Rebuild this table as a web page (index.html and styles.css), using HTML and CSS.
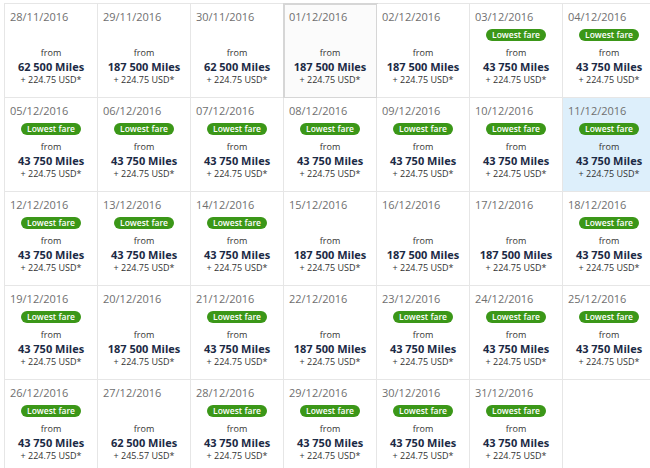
FILE: index.html
```html
<!DOCTYPE html>
<html>
<head>
<meta charset="utf-8">
<link rel="stylesheet" href="styles.css">
</head>
<body>
<div class="page">
<div class="grid">
<div class="cell"><div class="date">28/11/2016</div><div class="badge-row"></div><div class="from">from</div><div class="miles">62 500 Miles</div><div class="usd">+ 224.75 USD*</div></div>
<div class="cell"><div class="date">29/11/2016</div><div class="badge-row"></div><div class="from">from</div><div class="miles">187 500 Miles</div><div class="usd">+ 224.75 USD*</div></div>
<div class="cell"><div class="date">30/11/2016</div><div class="badge-row"></div><div class="from">from</div><div class="miles">62 500 Miles</div><div class="usd">+ 224.75 USD*</div></div>
<div class="cell selected"><div class="date">01/12/2016</div><div class="badge-row"></div><div class="from">from</div><div class="miles">187 500 Miles</div><div class="usd">+ 224.75 USD*</div></div>
<div class="cell"><div class="date">02/12/2016</div><div class="badge-row"></div><div class="from">from</div><div class="miles">187 500 Miles</div><div class="usd">+ 224.75 USD*</div></div>
<div class="cell"><div class="date">03/12/2016</div><div class="badge-row"><span class="badge">Lowest fare</span></div><div class="from">from</div><div class="miles">43 750 Miles</div><div class="usd">+ 224.75 USD*</div></div>
<div class="cell"><div class="date">04/12/2016</div><div class="badge-row"><span class="badge">Lowest fare</span></div><div class="from">from</div><div class="miles">43 750 Miles</div><div class="usd">+ 224.75 USD*</div></div>

<div class="cell"><div class="date">05/12/2016</div><div class="badge-row"><span class="badge">Lowest fare</span></div><div class="from">from</div><div class="miles">43 750 Miles</div><div class="usd">+ 224.75 USD*</div></div>
<div class="cell"><div class="date">06/12/2016</div><div class="badge-row"><span class="badge">Lowest fare</span></div><div class="from">from</div><div class="miles">43 750 Miles</div><div class="usd">+ 224.75 USD*</div></div>
<div class="cell"><div class="date">07/12/2016</div><div class="badge-row"><span class="badge">Lowest fare</span></div><div class="from">from</div><div class="miles">43 750 Miles</div><div class="usd">+ 224.75 USD*</div></div>
<div class="cell"><div class="date">08/12/2016</div><div class="badge-row"><span class="badge">Lowest fare</span></div><div class="from">from</div><div class="miles">43 750 Miles</div><div class="usd">+ 224.75 USD*</div></div>
<div class="cell"><div class="date">09/12/2016</div><div class="badge-row"><span class="badge">Lowest fare</span></div><div class="from">from</div><div class="miles">43 750 Miles</div><div class="usd">+ 224.75 USD*</div></div>
<div class="cell"><div class="date">10/12/2016</div><div class="badge-row"><span class="badge">Lowest fare</span></div><div class="from">from</div><div class="miles">43 750 Miles</div><div class="usd">+ 224.75 USD*</div></div>
<div class="cell today"><div class="date">11/12/2016</div><div class="badge-row"><span class="badge">Lowest fare</span></div><div class="from">from</div><div class="miles">43 750 Miles</div><div class="usd">+ 224.75 USD*</div></div>

<div class="cell"><div class="date">12/12/2016</div><div class="badge-row"><span class="badge">Lowest fare</span></div><div class="from">from</div><div class="miles">43 750 Miles</div><div class="usd">+ 224.75 USD*</div></div>
<div class="cell"><div class="date">13/12/2016</div><div class="badge-row"><span class="badge">Lowest fare</span></div><div class="from">from</div><div class="miles">43 750 Miles</div><div class="usd">+ 224.75 USD*</div></div>
<div class="cell"><div class="date">14/12/2016</div><div class="badge-row"><span class="badge">Lowest fare</span></div><div class="from">from</div><div class="miles">43 750 Miles</div><div class="usd">+ 224.75 USD*</div></div>
<div class="cell"><div class="date">15/12/2016</div><div class="badge-row"></div><div class="from">from</div><div class="miles">187 500 Miles</div><div class="usd">+ 224.75 USD*</div></div>
<div class="cell"><div class="date">16/12/2016</div><div class="badge-row"></div><div class="from">from</div><div class="miles">187 500 Miles</div><div class="usd">+ 224.75 USD*</div></div>
<div class="cell"><div class="date">17/12/2016</div><div class="badge-row"></div><div class="from">from</div><div class="miles">187 500 Miles</div><div class="usd">+ 224.75 USD*</div></div>
<div class="cell"><div class="date">18/12/2016</div><div class="badge-row"><span class="badge">Lowest fare</span></div><div class="from">from</div><div class="miles">43 750 Miles</div><div class="usd">+ 224.75 USD*</div></div>

<div class="cell"><div class="date">19/12/2016</div><div class="badge-row"><span class="badge">Lowest fare</span></div><div class="from">from</div><div class="miles">43 750 Miles</div><div class="usd">+ 224.75 USD*</div></div>
<div class="cell"><div class="date">20/12/2016</div><div class="badge-row"></div><div class="from">from</div><div class="miles">187 500 Miles</div><div class="usd">+ 224.75 USD*</div></div>
<div class="cell"><div class="date">21/12/2016</div><div class="badge-row"><span class="badge">Lowest fare</span></div><div class="from">from</div><div class="miles">43 750 Miles</div><div class="usd">+ 224.75 USD*</div></div>
<div class="cell"><div class="date">22/12/2016</div><div class="badge-row"></div><div class="from">from</div><div class="miles">187 500 Miles</div><div class="usd">+ 224.75 USD*</div></div>
<div class="cell"><div class="date">23/12/2016</div><div class="badge-row"><span class="badge">Lowest fare</span></div><div class="from">from</div><div class="miles">43 750 Miles</div><div class="usd">+ 224.75 USD*</div></div>
<div class="cell"><div class="date">24/12/2016</div><div class="badge-row"><span class="badge">Lowest fare</span></div><div class="from">from</div><div class="miles">43 750 Miles</div><div class="usd">+ 224.75 USD*</div></div>
<div class="cell"><div class="date">25/12/2016</div><div class="badge-row"><span class="badge">Lowest fare</span></div><div class="from">from</div><div class="miles">43 750 Miles</div><div class="usd">+ 224.75 USD*</div></div>

<div class="cell"><div class="date">26/12/2016</div><div class="badge-row"><span class="badge">Lowest fare</span></div><div class="from">from</div><div class="miles">43 750 Miles</div><div class="usd">+ 224.75 USD*</div></div>
<div class="cell"><div class="date">27/12/2016</div><div class="badge-row"></div><div class="from">from</div><div class="miles">62 500 Miles</div><div class="usd">+ 245.57 USD*</div></div>
<div class="cell"><div class="date">28/12/2016</div><div class="badge-row"><span class="badge">Lowest fare</span></div><div class="from">from</div><div class="miles">43 750 Miles</div><div class="usd">+ 224.75 USD*</div></div>
<div class="cell"><div class="date">29/12/2016</div><div class="badge-row"><span class="badge">Lowest fare</span></div><div class="from">from</div><div class="miles">43 750 Miles</div><div class="usd">+ 224.75 USD*</div></div>
<div class="cell"><div class="date">30/12/2016</div><div class="badge-row"><span class="badge">Lowest fare</span></div><div class="from">from</div><div class="miles">43 750 Miles</div><div class="usd">+ 224.75 USD*</div></div>
<div class="cell"><div class="date">31/12/2016</div><div class="badge-row"><span class="badge">Lowest fare</span></div><div class="from">from</div><div class="miles">43 750 Miles</div><div class="usd">+ 224.75 USD*</div></div>
<div class="cell empty"></div>
</div>
</div>
</body>
</html>
```

FILE: styles.css
```css
html, body {
  margin: 0;
  padding: 0;
  background: #ffffff;
}
body {
  font-family: "Open Sans", "Liberation Sans", sans-serif;
  width: 650px;
  height: 468px;
  overflow: hidden;
}
.page {
  padding: 3px 0 0 4px;
}
.grid {
  display: grid;
  grid-template-columns: repeat(7, 93px);
  grid-auto-rows: 94px;
  width: 651px;
  border-left: 1px solid #e6e6e6;
  border-top: 1px solid #e6e6e6;
}
.cell {
  box-sizing: border-box;
  border-right: 1px solid #e6e6e6;
  border-bottom: 1px solid #e6e6e6;
  padding: 5px 0 0 5px;
  text-align: center;
  background: #ffffff;
}
.cell.selected {
  background: #fbfbfb;
  outline: 2px solid #d6d6d6;
  outline-offset: -1px;
}
.cell.today {
  background: #ddeffb;
}
.date {
  text-align: left;
  font-size: 11px;
  line-height: 15px;
  color: #6f6f6f;
}
.badge-row {
  height: 12px;
  margin-top: 5px;
  display: flex;
  justify-content: center;
  padding-right: 5px;
}
.badge {
  display: block;
  background: #3b9718;
  color: #ffffff;
  font-size: 8.5px;
  font-weight: 600;
  line-height: 12px;
  height: 12px;
  padding: 0 6px;
  border-radius: 6px;
}
.from {
  margin-top: 6px;
  font-size: 9px;
  line-height: 12px;
  color: #333333;
  padding-right: 5px;
}
.miles {
  margin-top: 1px;
  font-size: 11px;
  font-weight: 700;
  line-height: 14px;
  color: #1c2a45;
  padding-right: 5px;
}
.usd {
  font-size: 9px;
  line-height: 12px;
  color: #333333;
  padding-right: 5px;
}
```
